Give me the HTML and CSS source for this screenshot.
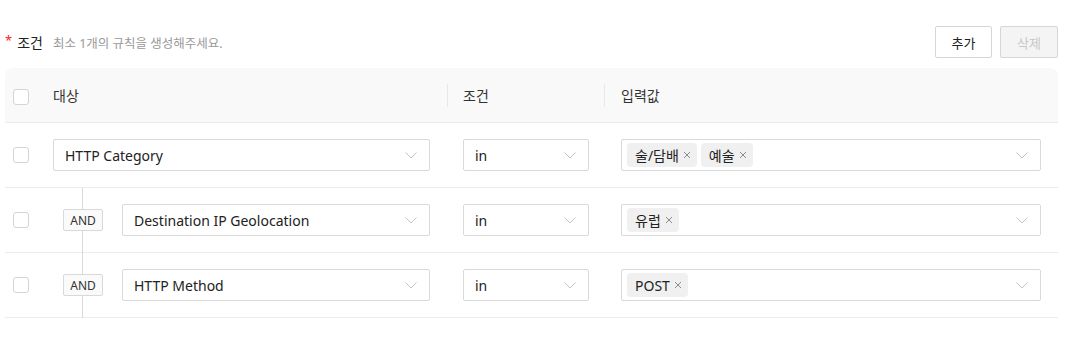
FILE: index.html
```html
<!DOCTYPE html>
<html lang="ko">
<head>
    <meta charset="UTF-8">
    <meta name="viewport" content="width=device-width, initial-scale=1.0">
    <title>조건</title>
    <link rel="stylesheet" href="styles.css">
</head>
<body>
    <div class="panel">
        <div class="panel-head">
            <div class="title">
                <span class="req">*</span>
                <span class="title-text">조건</span>
                <span class="hint">최소 1개의 규칙을 생성해주세요.</span>
            </div>
            <div class="actions">
                <button class="btn">추가</button>
                <button class="btn" disabled>삭제</button>
            </div>
        </div>

        <div class="table">
            <div class="row head">
                <div class="cell check"><span class="checkbox"></span></div>
                <div class="cell target">대상</div>
                <div class="cell op sep">조건</div>
                <div class="cell value sep">입력값</div>
            </div>

            <div class="row">
                <div class="cell check"><span class="checkbox"></span></div>
                <div class="cell target">
                    <div class="select wide">
                        <span>HTTP Category</span>
                        <svg class="arrow" width="12" height="7" viewBox="0 0 12 7"><polyline points="0.5,0.5 6,6 11.5,0.5" fill="none" stroke="#c4c4c4" stroke-width="1"/></svg>
                    </div>
                </div>
                <div class="cell op">
                    <div class="select">
                        <span>in</span>
                        <svg class="arrow" width="12" height="7" viewBox="0 0 12 7"><polyline points="0.5,0.5 6,6 11.5,0.5" fill="none" stroke="#c4c4c4" stroke-width="1"/></svg>
                    </div>
                </div>
                <div class="cell value">
                    <div class="select multi">
                        <div class="tags">
                            <span class="tag">술/담배<svg width="8" height="8" viewBox="0 0 8 8"><path d="M1 1L7 7M7 1L1 7" stroke="#8c8c8c" stroke-width="1"/></svg></span>
                            <span class="tag">예술<svg width="8" height="8" viewBox="0 0 8 8"><path d="M1 1L7 7M7 1L1 7" stroke="#8c8c8c" stroke-width="1"/></svg></span>
                        </div>
                        <svg class="arrow" width="12" height="7" viewBox="0 0 12 7"><polyline points="0.5,0.5 6,6 11.5,0.5" fill="none" stroke="#c4c4c4" stroke-width="1"/></svg>
                    </div>
                </div>
            </div>

            <div class="row">
                <div class="cell check"><span class="checkbox"></span></div>
                <div class="cell target nested">
                    <span class="and">AND</span>
                    <div class="select">
                        <span>Destination IP Geolocation</span>
                        <svg class="arrow" width="12" height="7" viewBox="0 0 12 7"><polyline points="0.5,0.5 6,6 11.5,0.5" fill="none" stroke="#c4c4c4" stroke-width="1"/></svg>
                    </div>
                </div>
                <div class="cell op">
                    <div class="select">
                        <span>in</span>
                        <svg class="arrow" width="12" height="7" viewBox="0 0 12 7"><polyline points="0.5,0.5 6,6 11.5,0.5" fill="none" stroke="#c4c4c4" stroke-width="1"/></svg>
                    </div>
                </div>
                <div class="cell value">
                    <div class="select multi">
                        <div class="tags">
                            <span class="tag">유럽<svg width="8" height="8" viewBox="0 0 8 8"><path d="M1 1L7 7M7 1L1 7" stroke="#8c8c8c" stroke-width="1"/></svg></span>
                        </div>
                        <svg class="arrow" width="12" height="7" viewBox="0 0 12 7"><polyline points="0.5,0.5 6,6 11.5,0.5" fill="none" stroke="#c4c4c4" stroke-width="1"/></svg>
                    </div>
                </div>
            </div>

            <div class="row">
                <div class="cell check"><span class="checkbox"></span></div>
                <div class="cell target nested">
                    <span class="and">AND</span>
                    <div class="select">
                        <span>HTTP Method</span>
                        <svg class="arrow" width="12" height="7" viewBox="0 0 12 7"><polyline points="0.5,0.5 6,6 11.5,0.5" fill="none" stroke="#c4c4c4" stroke-width="1"/></svg>
                    </div>
                </div>
                <div class="cell op">
                    <div class="select">
                        <span>in</span>
                        <svg class="arrow" width="12" height="7" viewBox="0 0 12 7"><polyline points="0.5,0.5 6,6 11.5,0.5" fill="none" stroke="#c4c4c4" stroke-width="1"/></svg>
                    </div>
                </div>
                <div class="cell value">
                    <div class="select multi">
                        <div class="tags">
                            <span class="tag">POST<svg width="8" height="8" viewBox="0 0 8 8"><path d="M1 1L7 7M7 1L1 7" stroke="#8c8c8c" stroke-width="1"/></svg></span>
                        </div>
                        <svg class="arrow" width="12" height="7" viewBox="0 0 12 7"><polyline points="0.5,0.5 6,6 11.5,0.5" fill="none" stroke="#c4c4c4" stroke-width="1"/></svg>
                    </div>
                </div>
            </div>
        </div>
    </div>
</body>
</html>
```

FILE: styles.css
```css
body {
    font-family: "Noto Sans", "Noto Sans CJK KR", sans-serif;
    background-color: #fff;
    color: #333;
    margin: 0;
    padding: 0;
}
.panel {
    width: 1053px;
    margin-left: 5px;
    padding-top: 26px;
}
.panel-head {
    display: flex;
    align-items: center;
    justify-content: space-between;
    height: 32px;
}
.title {
    display: flex;
    align-items: center;
}
.req {
    color: #f5222d;
    font-size: 13px;
    margin-right: 5px;
    margin-top: -4px;
}
.title-text {
    font-size: 14px;
    color: #222;
    margin-right: 10px;
}
.hint {
    font-size: 12.5px;
    color: #999;
}
.actions {
    display: flex;
    gap: 8px;
}
.btn {
    font-family: inherit;
    font-size: 13px;
    color: #222;
    background-color: #fff;
    border: 1px solid #d6d6d6;
    border-radius: 2px;
    height: 32px;
    width: 57px;
    padding: 0;
    cursor: pointer;
}
.btn:disabled {
    background-color: #f4f4f4;
    color: #c8c8c8;
    width: 58px;
    cursor: default;
}
.table {
    margin-top: 10px;
}
.row {
    display: grid;
    grid-template-columns: 48px 394px 157px 454px;
    height: 64px;
    border-bottom: 1px solid #ececec;
    font-size: 14px;
}
.row.head {
    height: 54px;
    background-color: #f9f9f9;
    border-radius: 8px 8px 0 0;
}
.cell {
    display: flex;
    align-items: center;
    position: relative;
}
.check {
    padding-left: 8px;
}
.checkbox {
    display: block;
    width: 14px;
    height: 14px;
    border: 1px solid #d4d4d4;
    border-radius: 3px;
    background-color: #fff;
}
.head .checkbox {
    margin-top: 3px;
}
.target {
    padding-right: 17px;
}
.op {
    padding-left: 16px;
    padding-right: 15px;
}
.value {
    padding-left: 17px;
    padding-right: 17px;
}
.sep::before {
    content: "";
    position: absolute;
    left: 0;
    top: 16px;
    width: 1px;
    height: 23px;
    background-color: #e8e8e8;
}
.select {
    flex: 1;
    height: 32px;
    box-sizing: border-box;
    border: 1px solid #d9d9d9;
    border-radius: 2px;
    display: flex;
    align-items: center;
    justify-content: space-between;
    padding: 0 12px 0 11px;
    color: #222;
}
.multi {
    padding-left: 5px;
}
.tags {
    display: flex;
    gap: 4px;
}
.tag {
    display: flex;
    align-items: center;
    gap: 4px;
    height: 24px;
    padding: 0 6px 0 8px;
    background-color: #f0f0f0;
    border-radius: 4px;
}
.nested::after {
    content: "";
    position: absolute;
    left: 29px;
    top: 0;
    bottom: -1px;
    width: 1px;
    background-color: #d9d9d9;
    z-index: 0;
}
.and {
    position: relative;
    z-index: 1;
    width: 38px;
    height: 20px;
    margin-left: 10px;
    margin-right: 19px;
    border: 1px solid #d9d9d9;
    border-radius: 2px;
    background-color: #fafafa;
    font-size: 12px;
    display: flex;
    align-items: center;
    justify-content: center;
    color: #333;
}
```
